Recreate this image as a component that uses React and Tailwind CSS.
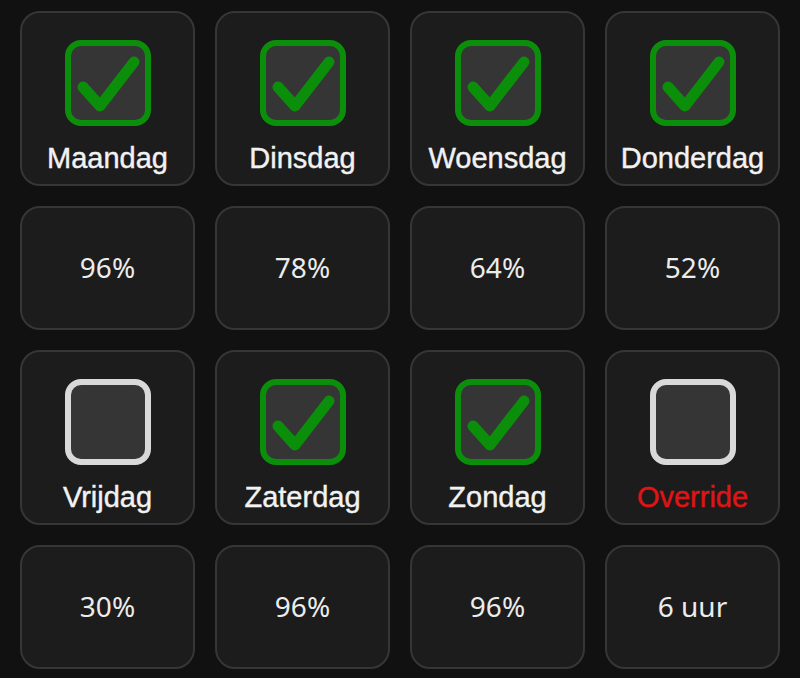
import React from 'react';

const days = [
  { label: 'Maandag', checked: true },
  { label: 'Dinsdag', checked: true },
  { label: 'Woensdag', checked: true },
  { label: 'Donderdag', checked: true },
];

const days2 = [
  { label: 'Vrijdag', checked: false },
  { label: 'Zaterdag', checked: true },
  { label: 'Zondag', checked: true },
  { label: 'Override', checked: false, red: true },
];

function Checkbox({ checked }) {
  return (
    <svg width="86" height="86" viewBox="0 0 86 86">
      <rect
        x="3"
        y="3"
        width="80"
        height="80"
        rx="13"
        fill="#353535"
        stroke={checked ? '#0b8f0b' : '#d9d9d9'}
        strokeWidth="6"
      />
      {checked && (
        <path
          d="M18 47 L35 66 L69 22"
          fill="none"
          stroke="#0b8f0b"
          strokeWidth="11"
          strokeLinecap="round"
          strokeLinejoin="round"
        />
      )}
    </svg>
  );
}

function DayTile({ label, checked, red }) {
  return (
    <div className="h-[175px] rounded-[20px] border-2 border-[#363636] bg-[#1c1c1c] flex flex-col items-center pt-[27px]">
      <Checkbox checked={checked} />
      <div
        className={`mt-[15px] text-[29px] leading-[34px] ${red ? 'text-[#e01414]' : 'text-[#f2f2f2]'}`}
        style={{ fontFamily: '"Liberation Sans", Arial, sans-serif', WebkitTextStroke: '0.4px currentColor' }}
      >
        {label}
      </div>
    </div>
  );
}

function ValueTile({ value }) {
  return (
    <div
      className="h-[124px] rounded-[20px] border-2 border-[#363636] bg-[#1c1c1c] flex items-center justify-center pb-[2px] text-[28px] text-[#ececec]"
      style={{ fontFamily: '"Noto Sans", "Open Sans", sans-serif' }}
    >
      {value}
    </div>
  );
}

export default function App() {
  return (
    <div className="min-h-screen bg-[#111111] pl-[20px] pt-[11px]">
      <div className="grid grid-cols-[repeat(4,175px)] gap-x-5 gap-y-5">
        {days.map(d => <DayTile key={d.label} {...d} />)}
        {['96%', '78%', '64%', '52%'].map((v, i) => <ValueTile key={i} value={v} />)}
        {days2.map(d => <DayTile key={d.label} {...d} />)}
        {['30%', '96%', '96%', '6 uur'].map((v, i) => <ValueTile key={i} value={v} />)}
      </div>
    </div>
  );
}
